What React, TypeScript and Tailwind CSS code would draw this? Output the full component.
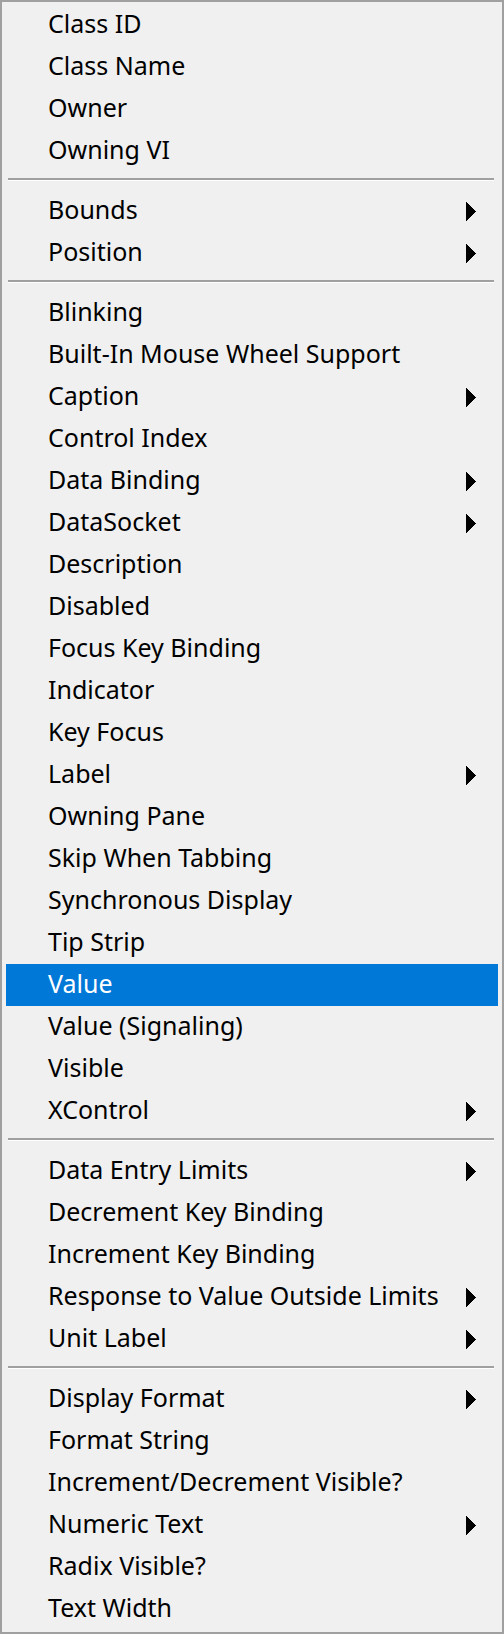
import React from "react";

type Item = { label: string; sub?: boolean; active?: boolean } | "sep";

const items: Item[] = [
  { label: "Class ID" },
  { label: "Class Name" },
  { label: "Owner" },
  { label: "Owning VI" },
  "sep",
  { label: "Bounds", sub: true },
  { label: "Position", sub: true },
  "sep",
  { label: "Blinking" },
  { label: "Built-In Mouse Wheel Support" },
  { label: "Caption", sub: true },
  { label: "Control Index" },
  { label: "Data Binding", sub: true },
  { label: "DataSocket", sub: true },
  { label: "Description" },
  { label: "Disabled" },
  { label: "Focus Key Binding" },
  { label: "Indicator" },
  { label: "Key Focus" },
  { label: "Label", sub: true },
  { label: "Owning Pane" },
  { label: "Skip When Tabbing" },
  { label: "Synchronous Display" },
  { label: "Tip Strip" },
  { label: "Value", active: true },
  { label: "Value (Signaling)" },
  { label: "Visible" },
  { label: "XControl", sub: true },
  "sep",
  { label: "Data Entry Limits", sub: true },
  { label: "Decrement Key Binding" },
  { label: "Increment Key Binding" },
  { label: "Response to Value Outside Limits", sub: true },
  { label: "Unit Label", sub: true },
  "sep",
  { label: "Display Format", sub: true },
  { label: "Format String" },
  { label: "Increment/Decrement Visible?" },
  { label: "Numeric Text", sub: true },
  { label: "Radix Visible?" },
  { label: "Text Width" },
];

function Arrow({ white }: { white?: boolean }) {
  return (
    <svg width="10" height="19" viewBox="0 0 10 19" className="block" shapeRendering="crispEdges">
      <polygon points="0,0 10,9.5 0,19" fill={white ? "#ffffff" : "#000000"} />
    </svg>
  );
}

export default function App() {
  return (
    <div
      className="w-[504px] h-[1634px] border-2 border-[#a0a0a0] bg-[#f0f0f0] p-[2px] box-border overflow-hidden"
      style={{ fontFamily: '"Noto Sans", "Open Sans", sans-serif' }}
    >
      {items.map((it, i) =>
        it === "sep" ? (
          <div key={i} className="h-[18px] pt-[6px] pl-[4px] pr-[6px]">
            <div className="h-[2px] bg-[#a0a0a0]" />
            <div className="h-[1px] bg-white" />
          </div>
        ) : (
          <div
            key={i}
            className={
              "mx-[2px] h-[42px] flex items-center pl-[42px] pr-[22px] text-[25px] leading-none " +
              (it.active ? "bg-[#0078d7] text-white" : "text-black")
            }
          >
            <span className="flex-1 whitespace-nowrap pb-[3px]">{it.label}</span>
            {it.sub ? <Arrow white={it.active} /> : null}
          </div>
        )
      )}
    </div>
  );
}
